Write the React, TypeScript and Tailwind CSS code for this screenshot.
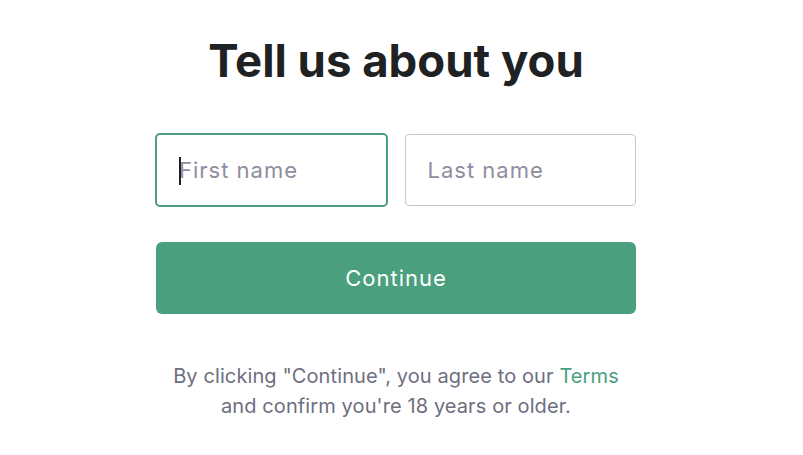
export default function App() {
    return (
        <div className="w-[792px] min-h-[455px] bg-white flex justify-center" style={{ fontFamily: 'Inter, "Noto Sans", sans-serif' }}>
            <div className="w-[480px] flex flex-col items-center pt-[33px]">
                {/* heading */}
                <h1 className="text-[45.5px] leading-[56px] font-bold text-[#202123]">Tell us about you</h1>

                {/* name inputs */}
                <div className="grid grid-cols-2 gap-[17px] w-full mt-[44px]">
                    <div className="relative h-[74px] rounded-[5px] border-2 border-[#4a9f7e] flex items-center pl-[22px] -ml-px">
                        <span className="absolute left-[22px] top-[22px] w-[2px] h-[28px] bg-[#202123]" />
                        <input
                            className="flex-1 min-w-0 outline-none text-[22px] tracking-[1px] text-[#202123] placeholder:text-[#8e8ea0] bg-transparent"
                            placeholder="First name"
                        />
                    </div>
                    <div className="h-[72px] mt-px rounded-[4px] border border-[#c2c8d0] flex items-center pl-[22px]">
                        <input
                            className="flex-1 min-w-0 outline-none text-[22px] tracking-[1px] text-[#202123] placeholder:text-[#8e8ea0] bg-transparent"
                            placeholder="Last name"
                        />
                    </div>
                </div>

                {/* continue */}
                <button className="w-full h-[72px] mt-[35px] rounded-[6px] bg-[#4a9f7e] text-white text-[22px] tracking-[1px]">Continue</button>

                {/* terms */}
                <p className="mt-[47px] text-center text-[20px] leading-[30px] tracking-[0.1px] text-[#6e6e80]">
                    By clicking "Continue", you agree to our <span className="text-[#4a9f7e]">Terms</span>
                    <br />
                    and confirm you're 18 years or older.
                </p>
            </div>
        </div>
    )
}
